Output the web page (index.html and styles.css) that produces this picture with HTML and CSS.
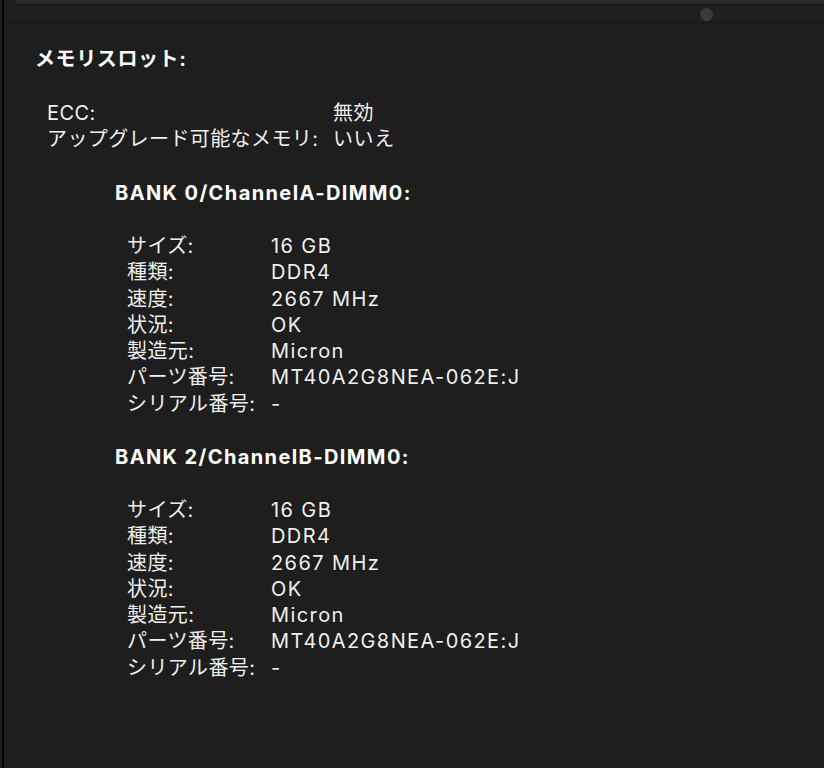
FILE: index.html
```html
<!DOCTYPE html>
<html lang="ja">
<head>
<meta charset="utf-8">
<link rel="stylesheet" href="styles.css">
</head>
<body>
<div class="frame">
  <div class="topstrip"></div>
  <div class="toolbar"><span class="dot"></span></div>
  <div class="content">
    <div class="title">メモリスロット:</div>
    <div class="kv top">
      <span class="k">ECC:</span><span class="v">無効</span>
      <span class="k">アップグレード可能なメモリ:</span><span class="v">いいえ</span>
    </div>
    <div class="bank">
      <div class="bank-title">BANK 0/ChannelA-DIMM0:</div>
      <div class="kv slot">
        <span class="k">サイズ:</span><span class="v">16 GB</span>
        <span class="k">種類:</span><span class="v">DDR4</span>
        <span class="k">速度:</span><span class="v">2667 MHz</span>
        <span class="k">状況:</span><span class="v">OK</span>
        <span class="k">製造元:</span><span class="v">Micron</span>
        <span class="k">パーツ番号:</span><span class="v">MT40A2G8NEA-062E:J</span>
        <span class="k">シリアル番号:</span><span class="v">-</span>
      </div>
    </div>
    <div class="bank">
      <div class="bank-title">BANK 2/ChannelB-DIMM0:</div>
      <div class="kv slot">
        <span class="k">サイズ:</span><span class="v">16 GB</span>
        <span class="k">種類:</span><span class="v">DDR4</span>
        <span class="k">速度:</span><span class="v">2667 MHz</span>
        <span class="k">状況:</span><span class="v">OK</span>
        <span class="k">製造元:</span><span class="v">Micron</span>
        <span class="k">パーツ番号:</span><span class="v">MT40A2G8NEA-062E:J</span>
        <span class="k">シリアル番号:</span><span class="v">-</span>
      </div>
    </div>
  </div>
</div>
</body>
</html>
```
FILE: styles.css
```css
html, body {
  margin: 0;
  padding: 0;
  background: #1e1e1e;
}
body {
  width: 824px;
  height: 768px;
  overflow: hidden;
  font-family: "Inter", "Noto Sans CJK JP", sans-serif;
  font-size: 20px;
  letter-spacing: 0.9px;
  color: #f0f0f0;
}
.frame {
  height: 768px;
  margin-left: 2px;
  border-left: 2px solid #050505;
  background: #1e1e1e;
  box-sizing: border-box;
}
.topstrip {
  height: 4px;
  margin-left: 12px;
  background: #2c2c2c;
  border-bottom: 1px solid #141414;
}
.toolbar {
  height: 17px;
  background: #1f1f1f;
  border-bottom: 1px solid #141414;
  position: relative;
}
.dot {
  position: absolute;
  left: 696px;
  top: 3px;
  width: 13px;
  height: 13px;
  border-radius: 50%;
  background: #3a3a3a;
}
.content {
  padding: 23px 0 0 31px;
  line-height: 26.3px;
}
.title {
  font-weight: 700;
  color: #ffffff;
  letter-spacing: 0.6px;
  margin-bottom: 27.7px;
}
.kv {
  display: grid;
}
.k {
  letter-spacing: 0.4px;
}
.v {
  letter-spacing: 1.4px;
}
.kv.top {
  padding-left: 12px;
  grid-template-columns: 286px auto;
}
.kv.top .v {
  letter-spacing: 0.6px;
}
.bank {
  padding-left: 80px;
  margin-top: 27.4px;
}
.bank + .bank {
  margin-top: 26.9px;
}
.bank-title {
  font-weight: 700;
  color: #ffffff;
  letter-spacing: 1.4px;
  margin-bottom: 26.7px;
}
.kv.slot {
  padding-left: 12px;
  grid-template-columns: 144px auto;
}
```
